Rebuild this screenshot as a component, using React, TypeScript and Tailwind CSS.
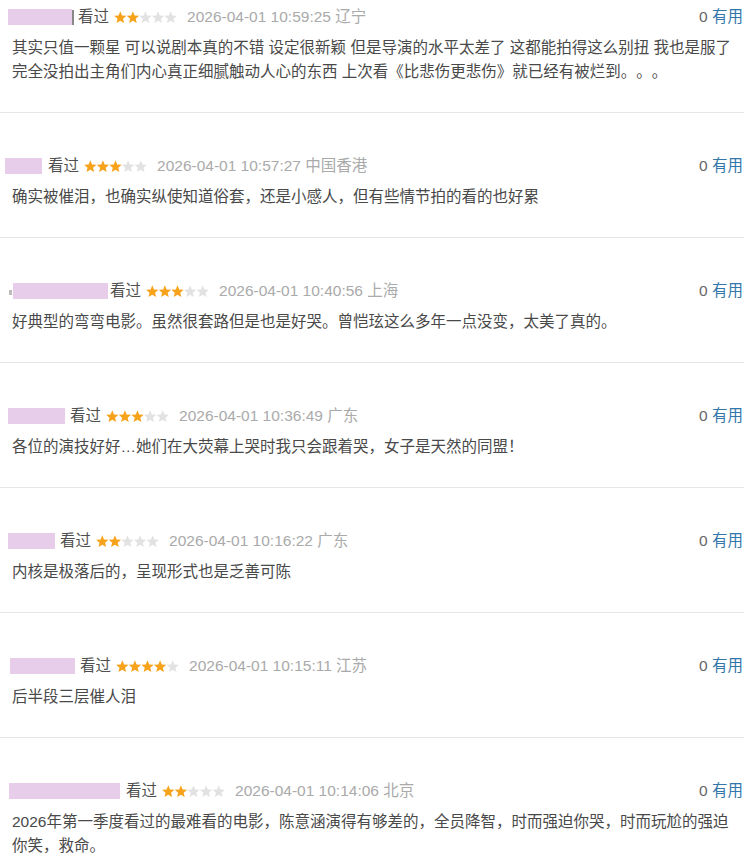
import React from "react";

type Review = {
  maskLeft: number;
  maskWidth: number;
  gap: number;
  stray?: "bar" | "dot";
  rating: number;
  time: string;
  place: string;
  text: string;
};

const reviews: Review[] = [
  {
    maskLeft: 8,
    maskWidth: 64,
    gap: 6,
    stray: "bar",
    rating: 2,
    time: "2026-04-01 10:59:25",
    place: "辽宁",
    text: "其实只值一颗星 可以说剧本真的不错 设定很新颖 但是导演的水平太差了 这都能拍得这么别扭 我也是服了完全没拍出主角们内心真正细腻触动人心的东西 上次看《比悲伤更悲伤》就已经有被烂到。。。",
  },
  {
    maskLeft: 5,
    maskWidth: 37,
    gap: 6,
    rating: 3,
    time: "2026-04-01 10:57:27",
    place: "中国香港",
    text: "确实被催泪，也确实纵使知道俗套，还是小感人，但有些情节拍的看的也好累",
  },
  {
    maskLeft: 13,
    maskWidth: 95,
    gap: 2,
    stray: "dot",
    rating: 3,
    time: "2026-04-01 10:40:56",
    place: "上海",
    text: "好典型的弯弯电影。虽然很套路但是也是好哭。曾恺玹这么多年一点没变，太美了真的。",
  },
  {
    maskLeft: 8,
    maskWidth: 57,
    gap: 5,
    rating: 3,
    time: "2026-04-01 10:36:49",
    place: "广东",
    text: "各位的演技好好…她们在大荧幕上哭时我只会跟着哭，女子是天然的同盟！",
  },
  {
    maskLeft: 8,
    maskWidth: 47,
    gap: 5,
    rating: 2,
    time: "2026-04-01 10:16:22",
    place: "广东",
    text: "内核是极落后的，呈现形式也是乏善可陈",
  },
  {
    maskLeft: 10,
    maskWidth: 65,
    gap: 5,
    rating: 4,
    time: "2026-04-01 10:15:11",
    place: "江苏",
    text: "后半段三层催人泪",
  },
  {
    maskLeft: 9,
    maskWidth: 111,
    gap: 6,
    rating: 2,
    time: "2026-04-01 10:14:06",
    place: "北京",
    text: "2026年第一季度看过的最难看的电影，陈意涵演得有够差的，全员降智，时而强迫你哭，时而玩尬的强迫你笑，救命。",
  },
];

const starPath =
  "M6.3 0.3 L8 4.45 L12.48 4.79 L9.06 7.7 L10.12 12.06 L6.3 9.7 L2.48 12.06 L3.54 7.7 L0.12 4.79 L4.6 4.45 Z";

function Stars({ rating }: { rating: number }) {
  return (
    <svg width="64" height="13" viewBox="0 0 64 13" className="shrink-0">
      {[0, 1, 2, 3, 4].map((i) => (
        <path
          key={i}
          d={starPath}
          transform={`translate(${i * 12.6} 0)`}
          fill={i < rating ? "#f7a21b" : "#e2e2e2"}
        />
      ))}
    </svg>
  );
}

function ReviewItem({ review, first }: { review: Review; first: boolean }) {
  return (
    <div
      className={
        first
          ? "border-b border-[#e6e6e6] pt-[7px] pb-[28px]"
          : "border-b border-[#e6e6e6] pt-[43px] pb-[28px]"
      }
    >
      <div className="flex h-[20px] items-center justify-between">
        <div className="flex items-center text-[15.5px] leading-[20px]">
          {review.stray === "dot" ? (
            <span className="ml-[9px] mt-[2px] h-[5px] w-[3px] bg-[#bbb]" />
          ) : null}
          <span
            className="h-[16px] bg-[#e7cdea]"
            style={{
              width: review.maskWidth,
              marginLeft: review.stray === "dot" ? 1 : review.maskLeft,
            }}
          />
          {review.stray === "bar" ? (
            <span className="h-[15px] w-[2px] bg-[#888]" />
          ) : null}
          <span
            className="text-[#4f4f4f]"
            style={{ marginLeft: review.gap - (review.stray === "bar" ? 2 : 0) }}
          >
            看过
          </span>
          <span className="ml-[5px] flex items-center">
            <Stars rating={review.rating} />
          </span>
          <span className="ml-[9px] text-[#aaa]">
            {review.time} {review.place}
          </span>
        </div>
        <div className="pr-[1px] text-[15.5px] leading-[20px]">
          <span className="text-[#666]">0 </span>
          <span className="text-[#3377aa]">有用</span>
        </div>
      </div>
      <p className="mt-[9px] pl-[12px] pr-[10px] text-[15.5px] leading-[24px] text-[#494949] [text-spacing-trim:space-all]">
        {review.text}
      </p>
    </div>
  );
}

export default function App() {
  return (
    <div
      className="min-h-screen bg-white"
      style={{ fontFamily: '"Liberation Sans", "Noto Sans CJK SC", sans-serif' }}
    >
      <div className="w-[744px]">
        {reviews.map((review, i) => (
          <ReviewItem key={review.time} review={review} first={i === 0} />
        ))}
      </div>
    </div>
  );
}
